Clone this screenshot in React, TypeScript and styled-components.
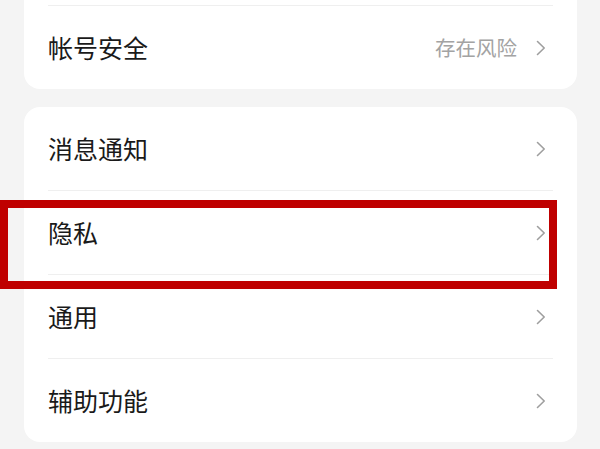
import React from "react";
import styled, { createGlobalStyle } from "styled-components";

const Global = createGlobalStyle`
  html, body { margin: 0; padding: 0; background: #f4f4f4; }
  body { font-family: "Noto Sans CJK SC", "Noto Sans", sans-serif; }
  #root { width: 600px; height: 449px; overflow: hidden; }
`;

const Page = styled.div`
  display: flex;
  flex-direction: column;
  gap: 18px;
  padding: 0 23px 0 24px;
  height: 449px;
  overflow: hidden;
  background: #f4f4f4;
`;

const Card = styled.div<{ $offset?: number }>`
  background: #ffffff;
  border-radius: 16px;
  margin-top: ${(p) => (p.$offset ? `${p.$offset}px` : "0")};
  display: flex;
  flex-direction: column;
`;

const Row = styled.div<{ $divider?: boolean }>`
  position: relative;
  height: 83px;
  display: flex;
  align-items: center;
  margin: 0 24px;
  padding: 0 7px 0 0;
  border-top: ${(p) => (p.$divider ? "1px solid #efefef" : "none")};
`;

const Label = styled.span`
  flex: 1;
  font-size: 25px;
  color: #1a1a1a;
  line-height: 1;
`;

const Value = styled.span`
  font-size: 20.5px;
  color: #a3a3a3;
  margin-right: 19px;
  line-height: 1;
`;

const Highlight = styled.div`
  position: absolute;
  z-index: 2;
  left: -48px;
  top: 9px;
  width: 557px;
  height: 89px;
  box-sizing: border-box;
  border: 8px solid #bf0000;
  pointer-events: none;
`;

const Chevron = () => (
  <svg width="10" height="16" viewBox="0 0 10 16" fill="none">
    <path d="M1.5 1.5 L8.2 8 L1.5 14.5" stroke="#9e9e9e" strokeWidth="1.6" strokeLinecap="round" strokeLinejoin="round" />
  </svg>
);

export default function App() {
  return (
    <>
      <Global />
      <Page>
        <Card $offset={-78}>
          <Row />
          <Row $divider>
            <Label>帐号安全</Label>
            <Value>存在风险</Value>
            <Chevron />
          </Row>
        </Card>
        <Card>
          <Row>
            <Label>消息通知</Label>
            <Chevron />
          </Row>
          <Row $divider>
            <Label>隐私</Label>
            <Chevron />
            <Highlight />
          </Row>
          <Row $divider>
            <Label>通用</Label>
            <Chevron />
          </Row>
          <Row $divider>
            <Label>辅助功能</Label>
            <Chevron />
          </Row>
        </Card>
      </Page>
    </>
  );
}
